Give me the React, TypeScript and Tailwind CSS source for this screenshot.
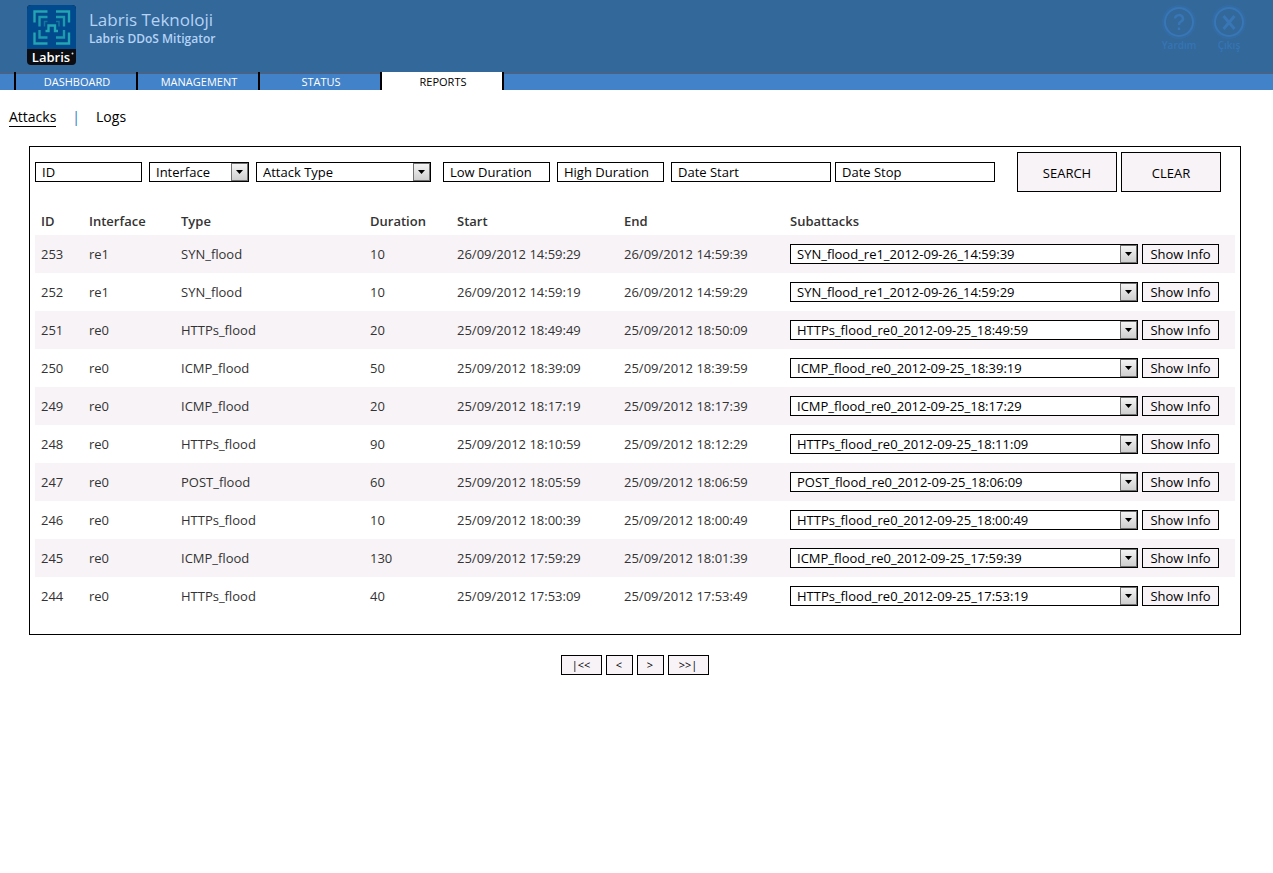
import React from "react";
import clsx from "clsx";

const TABS = ["DASHBOARD", "MANAGEMENT", "STATUS", "REPORTS"];

const ATTACKS = [
  { id: 253, iface: "re1", type: "SYN_flood", duration: 10, start: "26/09/2012 14:59:29", end: "26/09/2012 14:59:39", sub: "SYN_flood_re1_2012-09-26_14:59:39" },
  { id: 252, iface: "re1", type: "SYN_flood", duration: 10, start: "26/09/2012 14:59:19", end: "26/09/2012 14:59:29", sub: "SYN_flood_re1_2012-09-26_14:59:29" },
  { id: 251, iface: "re0", type: "HTTPs_flood", duration: 20, start: "25/09/2012 18:49:49", end: "25/09/2012 18:50:09", sub: "HTTPs_flood_re0_2012-09-25_18:49:59" },
  { id: 250, iface: "re0", type: "ICMP_flood", duration: 50, start: "25/09/2012 18:39:09", end: "25/09/2012 18:39:59", sub: "ICMP_flood_re0_2012-09-25_18:39:19" },
  { id: 249, iface: "re0", type: "ICMP_flood", duration: 20, start: "25/09/2012 18:17:19", end: "25/09/2012 18:17:39", sub: "ICMP_flood_re0_2012-09-25_18:17:29" },
  { id: 248, iface: "re0", type: "HTTPs_flood", duration: 90, start: "25/09/2012 18:10:59", end: "25/09/2012 18:12:29", sub: "HTTPs_flood_re0_2012-09-25_18:11:09" },
  { id: 247, iface: "re0", type: "POST_flood", duration: 60, start: "25/09/2012 18:05:59", end: "25/09/2012 18:06:59", sub: "POST_flood_re0_2012-09-25_18:06:09" },
  { id: 246, iface: "re0", type: "HTTPs_flood", duration: 10, start: "25/09/2012 18:00:39", end: "25/09/2012 18:00:49", sub: "HTTPs_flood_re0_2012-09-25_18:00:49" },
  { id: 245, iface: "re0", type: "ICMP_flood", duration: 130, start: "25/09/2012 17:59:29", end: "25/09/2012 18:01:39", sub: "ICMP_flood_re0_2012-09-25_17:59:39" },
  { id: 244, iface: "re0", type: "HTTPs_flood", duration: 40, start: "25/09/2012 17:53:09", end: "25/09/2012 17:53:49", sub: "HTTPs_flood_re0_2012-09-25_17:53:19" },
];

const PAGES = [
  { text: "|<<", label: "First page", width: "w-[41px]" },
  { text: "<", label: "Previous page", width: "w-[27px]" },
  { text: ">", label: "Next page", width: "w-[27px]" },
  { text: ">>|", label: "Last page", width: "w-[41px]" },
];

function Logo() {
  return (
    <svg width="49" height="60" viewBox="0 0 49 60" role="img" aria-label="Labris">
      <rect width="49" height="60" rx="4" fill="#0b0d12" />
      <path d="M4 0H45a4 4 0 0 1 4 4V44H0V4a4 4 0 0 1 4-4z" fill="#004a8d" />
      <g fill="none" stroke="#23a5b3" strokeWidth="2.4">
        <path d="M7.500 17.500V6.500H20.500M29 6.500H42V17.500M42 27.500V38.500H29M20.500 38.500H7.500V27.500" />
        <path d="M12.500 21.500V12H20.500M29 12H37V21.500" stroke="#1d9aad" />
        <path d="M17.500 21.500V16.500H20.500M29 16.500H32V21.500" stroke="#15779f" strokeWidth="1.500" />
        <path d="M12.500 25V32.500H20.500M29 32.500H37V25" stroke="#1d9aad" />
        <path d="M18.500 26H21.500V20.500H28V26H31" />
      </g>
      <text x="24" y="57" textAnchor="middle" fill="#fff" fontSize="13" fontWeight="600" fontFamily="Open Sans, sans-serif">
        Labris
      </text>
      <circle cx="45.500" cy="48.500" r="1" fill="#ddd" />
    </svg>
  );
}

function HeaderAction({ label, children }: { label: string; children: React.ReactNode }) {
  return (
    <a href="#" className="flex w-[50px] flex-col items-center text-[10px] leading-3 font-semibold text-[#3575b5]">
      <svg width="34" height="34" viewBox="0 0 34 34" fill="none" stroke="#3876b5" aria-hidden="true">
        <circle cx="17" cy="17" r="15" strokeWidth="4" stroke="#3470ad" opacity="0.5" />
        <circle cx="17" cy="17" r="14" strokeWidth="2" />
        {children}
      </svg>
      {label}
    </a>
  );
}

function Select({ label, option, className }: { label: string; option: string; className: string }) {
  return (
    <div className={clsx("relative h-5", className)}>
      <select aria-label={label} className="block h-5 w-full appearance-none border border-black bg-white pr-5 pl-[6px] text-[13px] leading-[18px] text-black">
        <option>{option}</option>
      </select>
      <span className="pointer-events-none absolute top-px right-px flex h-[18px] w-[17px] items-center justify-center border border-[#707070] bg-linear-to-b from-[#f4f4f4] to-[#cfcfcf]">
        <svg width="7" height="4" viewBox="0 0 7 4" aria-hidden="true">
          <path d="M0 0H7L3.500 4z" fill="#000" />
        </svg>
      </span>
    </div>
  );
}

function TextField({ label, className }: { label: string; className: string }) {
  return (
    <input
      type="text"
      aria-label={label}
      defaultValue={label}
      className={clsx("h-5 border border-black bg-white px-[6px] text-[13px] leading-[18px] text-black", className)}
    />
  );
}

function Filters() {
  return (
    <form className="flex flex-wrap items-center gap-y-2" onSubmit={(e) => e.preventDefault()}>
      <div className="mr-3 flex gap-[7px]">
        <TextField label="ID" className="w-[107px]" />
        <Select label="Interface" option="Interface" className="w-[100px]" />
        <Select label="Attack Type" option="Attack Type" className="w-[175px]" />
      </div>
      <div className="mr-[7px] flex gap-[7px]">
        <TextField label="Low Duration" className="w-[107px]" />
        <TextField label="High Duration" className="w-[107px]" />
      </div>
      <div className="mr-[22px] flex gap-1">
        <TextField label="Date Start" className="w-[160px]" />
        <TextField label="Date Stop" className="w-[160px]" />
      </div>
      <div className="flex gap-1">
        <button type="submit" className="h-10 w-[100px] border border-black bg-[#f7f3f7] pt-1 text-[13px]">
          SEARCH
        </button>
        <button type="reset" className="h-10 w-[100px] border border-black bg-[#f7f3f7] pt-1 text-[13px]">
          CLEAR
        </button>
      </div>
    </form>
  );
}

function AttackTable() {
  return (
    <table className="mt-4 w-full table-fixed text-left text-[13px] leading-5 text-[#333]">
      <colgroup>
        <col className="w-[48px]" />
        <col className="w-[92px]" />
        <col className="w-[189px]" />
        <col className="w-[87px]" />
        <col className="w-[167px]" />
        <col className="w-[166px]" />
        <col />
      </colgroup>
      <thead>
        <tr className="h-[27px]">
          {["ID", "Interface", "Type", "Duration", "Start", "End", "Subattacks"].map((name) => (
            <th key={name} scope="col" className="px-[6px] pb-[2px] font-semibold">
              {name}
            </th>
          ))}
        </tr>
      </thead>
      <tbody>
        {ATTACKS.map((attack) => (
          <tr key={attack.id} className="h-[38px] odd:bg-[#f7f3f7]">
            <td className="px-[6px]">{attack.id}</td>
            <td className="px-[6px]">{attack.iface}</td>
            <td className="px-[6px]">{attack.type}</td>
            <td className="px-[6px]">{attack.duration}</td>
            <td className="px-[6px] whitespace-nowrap">{attack.start}</td>
            <td className="px-[6px] whitespace-nowrap">{attack.end}</td>
            <td className="pr-4 pl-[6px]">
              <div className="flex gap-1">
                <Select label={`Subattacks of ${attack.id}`} option={attack.sub} className="min-w-0 flex-1" />
                <button type="button" className="h-5 w-[77px] border border-black bg-[#f7f3f7] leading-[18px] text-black">
                  Show Info
                </button>
              </div>
            </td>
          </tr>
        ))}
      </tbody>
    </table>
  );
}

export default function App() {
  return (
    <div className="min-h-screen bg-white font-['Open_Sans','Noto_Sans',sans-serif] text-black">
      <header className="flex h-[72px] justify-between bg-[#33689b] pt-[5px] pr-[19px] pl-[27px]">
        <div className="flex gap-[13px]">
          <Logo />
          <div className="pt-1 text-[#b5d3f5]">
            <h1 className="text-[17px] leading-[22px] font-medium">Labris Teknoloji</h1>
            <h2 className="text-xs leading-4 font-semibold">Labris DDoS Mitigator</h2>
          </div>
        </div>
        <div className="flex">
          <HeaderAction label="Yardım">
            <path d="M13 13.500a4 3.500 0 1 1 5.500 3.300q-1.500.7-1.500 3.200M17 22.500v2.500" strokeWidth="2.400" />
          </HeaderAction>
          <HeaderAction label="Çıkış">
            <path d="M11.500 11l11 13M22.500 11l-11 13" strokeWidth="3" />
          </HeaderAction>
        </div>
      </header>

      <nav className="flex h-[18px] bg-[linear-gradient(#476388_2px,#4282c8_2px)] pl-[14px] text-[11px] leading-5">
        {TABS.map((tab) => (
          <a
            key={tab}
            href="#"
            className={clsx(
              "w-[122px] border-l-2 border-black pl-[2px] text-center",
              tab === "REPORTS" ? "bg-white text-black" : "text-white"
            )}
          >
            {tab}
          </a>
        ))}
        <div className="w-[2px] bg-black"></div>
      </nav>

      <div className="flex pt-[18px] pl-[9px] text-sm leading-[18px]">
        <a href="#" className="border-b border-black">
          Attacks
        </a>
        <span className="px-4 text-[#2b78c0]">|</span>
        <a href="#">Logs</a>
      </div>

      <main className="mt-[19px] mr-8 ml-[29px]">
        <section className="border border-black px-[5px] pt-[5px] pb-[19px]">
          <Filters />
          <AttackTable />
        </section>
        <div className="mt-5 flex justify-center gap-1 pr-[1px]">
          {PAGES.map((page) => (
            <button
              key={page.label}
              type="button"
              aria-label={page.label}
              className={clsx("h-5 border border-black bg-[#f7f3f7] text-[11px] leading-[18px]", page.width)}
            >
              {page.text}
            </button>
          ))}
        </div>
      </main>
    </div>
  );
}
